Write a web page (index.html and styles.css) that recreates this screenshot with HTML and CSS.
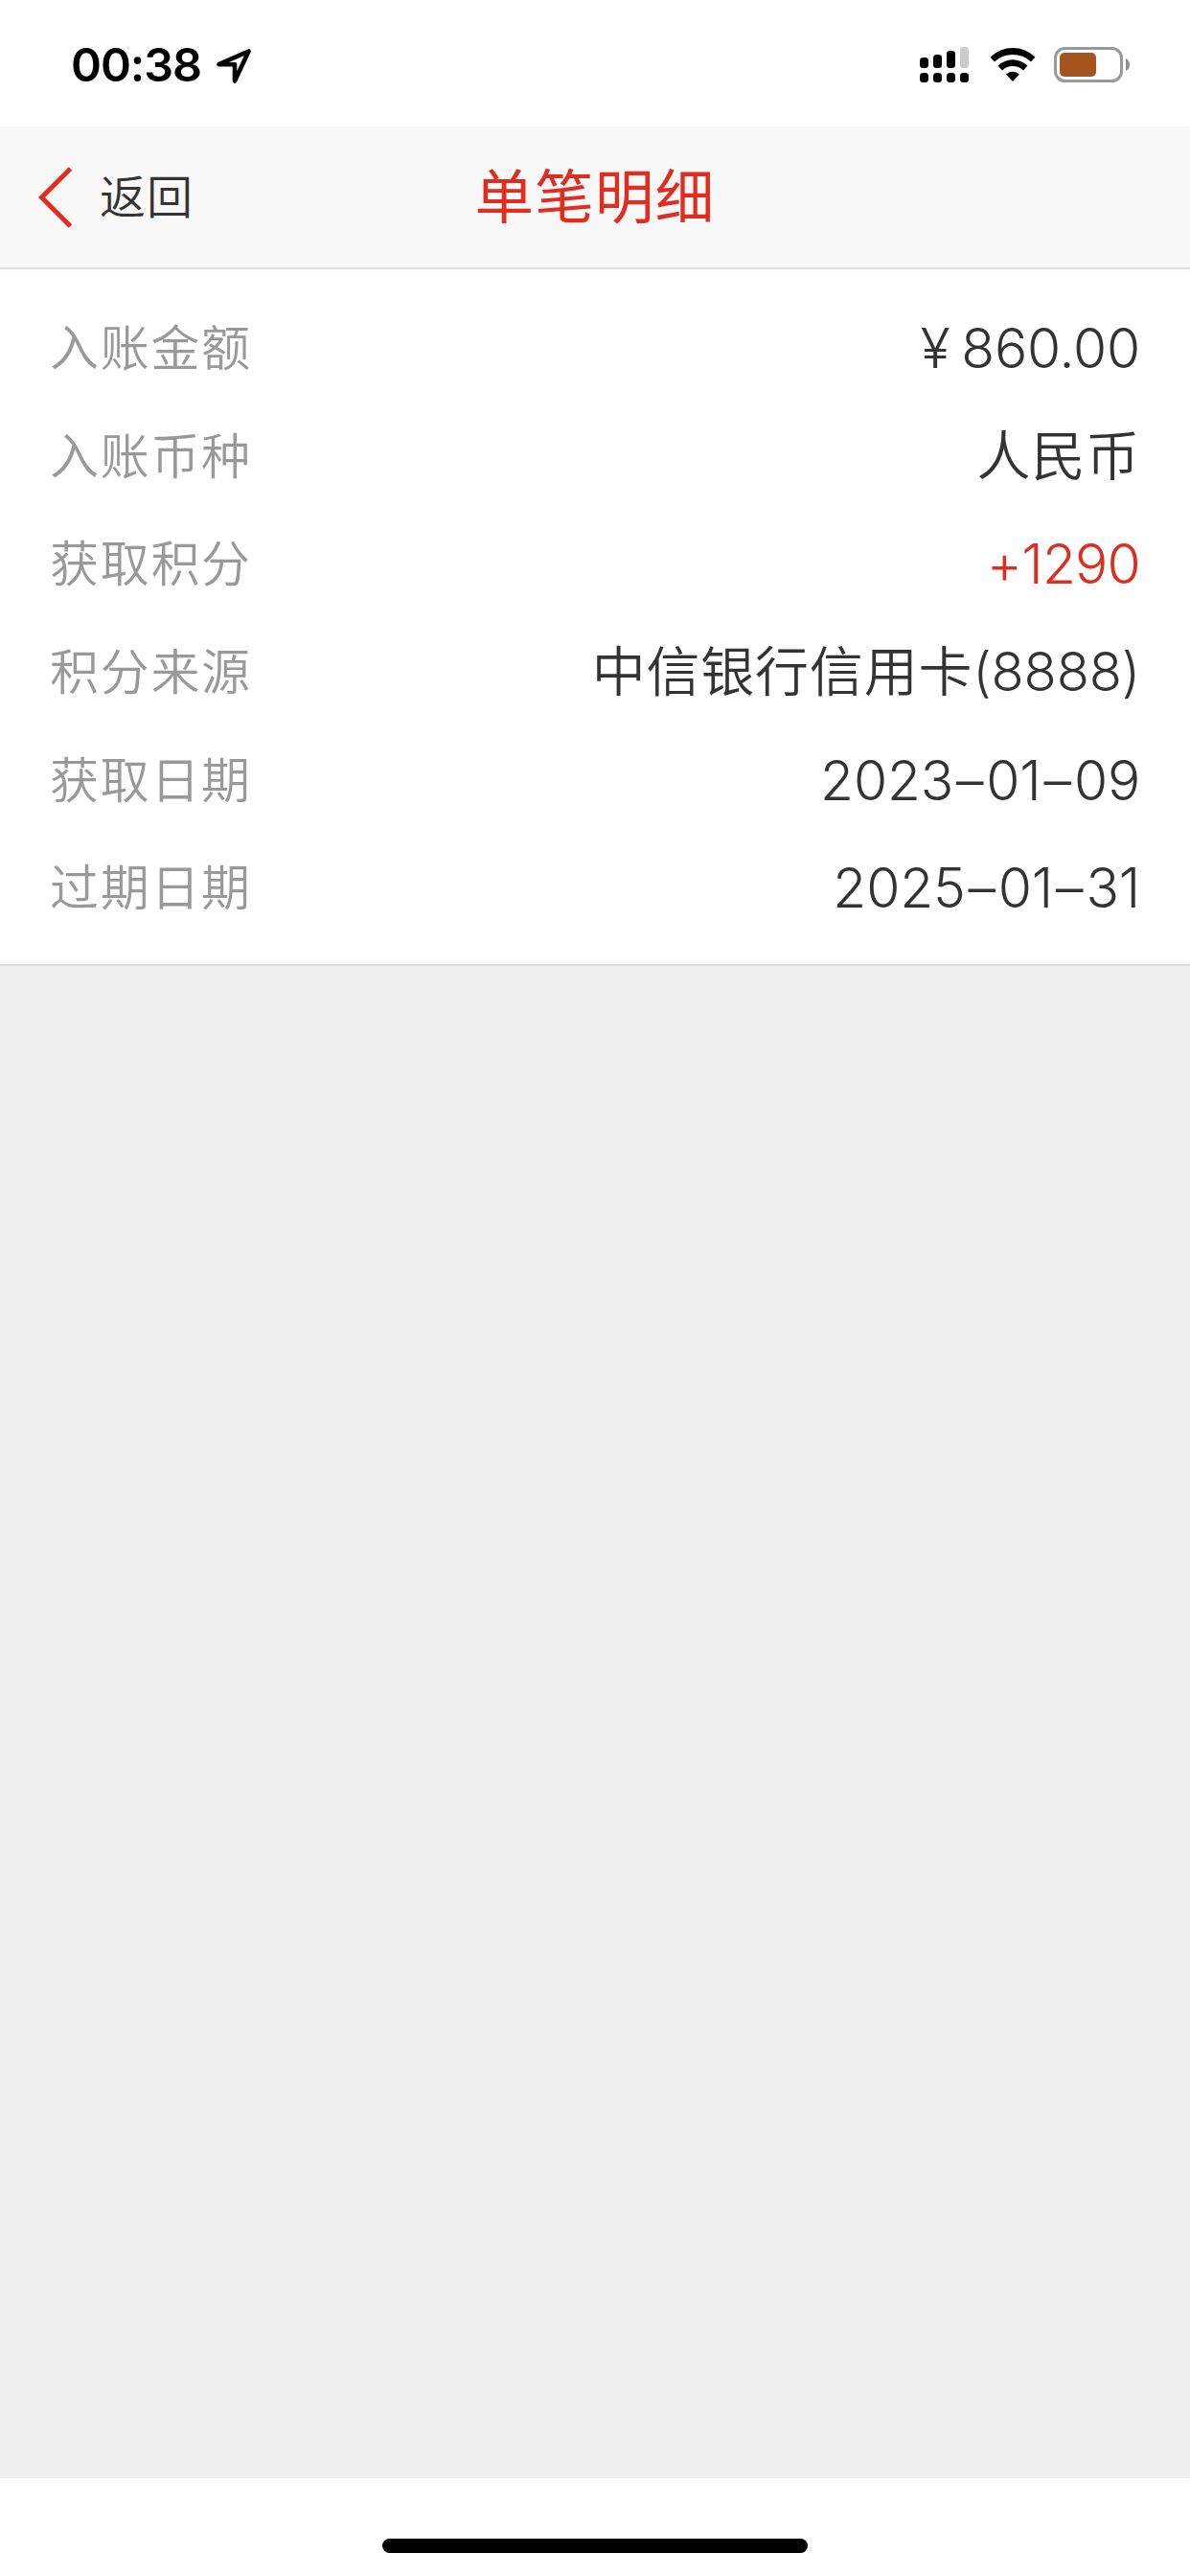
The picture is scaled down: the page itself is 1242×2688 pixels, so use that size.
FILE: index.html
```html
<!DOCTYPE html>
<html lang="zh-CN">
<head>
  <meta charset="UTF-8">
  <meta name="viewport" content="width=device-width, initial-scale=1.0">
  <title>单笔明细</title>
  <link rel="stylesheet" href="styles.css">
</head>
<body>
  <div class="status-bar">
    <div class="status-left">
      <span class="time">00:38</span>
      <svg class="location" width="38" height="38" viewBox="0 0 38 38">
        <path d="M3.5 17.2 L34.5 3.5 L20 34.5 V17.2 Z" fill="none" stroke="#000" stroke-width="4.6" stroke-linejoin="round"/>
      </svg>
    </div>
    <div class="status-right">
      <svg class="signal" width="52" height="38" viewBox="0 0 52 38">
        <rect x="0" y="11" width="9" height="11" rx="3.5"/>
        <rect x="14" y="8" width="9" height="14" rx="3.5"/>
        <rect x="28" y="4" width="9" height="18" rx="3.5"/>
        <rect x="42" y="0" width="9" height="22" rx="3.5" fill="#cbcbcb"/>
        <rect x="0" y="27" width="9" height="10" rx="3.5"/>
        <rect x="14" y="27" width="9" height="10" rx="3.5"/>
        <rect x="28" y="27" width="9" height="10" rx="3.5"/>
        <rect x="42" y="27" width="9" height="10" rx="3.5"/>
      </svg>
      <svg class="wifi" width="48" height="37" viewBox="0 0 48 37">
        <path d="M0.5 10.5 A34 34 0 0 1 47.5 10.5 L43 15.5 A27.5 27.5 0 0 0 5 15.5 Z"/>
        <path d="M8.5 19.5 A22.5 22.5 0 0 1 39.5 19.5 L35 24.5 A16 16 0 0 0 13 24.5 Z"/>
        <path d="M17 28.5 A10.5 10.5 0 0 1 31 28.5 L24 36 Z"/>
      </svg>
      <svg class="battery" width="80" height="38" viewBox="0 0 80 38">
        <rect x="1.5" y="1.5" width="69" height="34" rx="10" fill="none" stroke="#999" stroke-width="3"/>
        <rect x="6" y="6" width="38" height="25" rx="5" fill="#a4541f"/>
        <path d="M75 12 Q79 14 79 18.5 Q79 23 75 25 Z" fill="#8e8e8e"/>
      </svg>
    </div>
  </div>

  <header class="navbar">
    <a class="back">
      <svg width="36" height="64" viewBox="0 0 36 64">
        <path d="M34.5 2 L4.5 32 L34.5 62" fill="none" stroke="#e02d20" stroke-width="5"/>
      </svg>
      <span>返回</span>
    </a>
    <h1>单笔明细</h1>
  </header>

  <main>
    <div class="detail">
      <div class="item"><span class="label">入账金额</span><span class="value"><span class="yen">¥</span>860.00</span></div>
      <div class="item"><span class="label">入账币种</span><span class="value cjk">人民币</span></div>
      <div class="item"><span class="label">获取积分</span><span class="value red">+1290</span></div>
      <div class="item"><span class="label">积分来源</span><span class="value cjk">中信银行信用卡<span class="num">(8888)</span></span></div>
      <div class="item"><span class="label">获取日期</span><span class="value">2023<span class="dash">–</span>01<span class="dash">–</span>09</span></div>
      <div class="item"><span class="label">过期日期</span><span class="value">2025<span class="dash">–</span>01<span class="dash">–</span>31</span></div>
    </div>
  </main>

  <footer>
    <div class="home-bar"></div>
  </footer>
</body>
</html>
```
FILE: styles.css
```css
* {
  box-sizing: border-box;
}

body {
  margin: 0;
  height: 2688px;
  display: flex;
  flex-direction: column;
  background-color: #fff;
  font-family: Inter, "Noto Sans CJK SC", sans-serif;
  color: #333;
}

/* Barra de estado */
.status-bar {
  height: 132px;
  display: flex;
  justify-content: space-between;
  padding: 0 62px 0 74px;
}

.status-left, .status-right {
  display: flex;
  align-items: flex-start;
}

.time {
  margin-top: 39px;
  width: 151px;
  font-size: 48.5px;
  font-weight: 600;
  line-height: 58px;
  letter-spacing: -1.1px;
  color: #000;
}

.location {
  margin-top: 50px;
}

.signal, .battery {
  margin-top: 49px;
}

.wifi {
  margin: 49px 19px 0 21px;
}

/* Cabecera */
.navbar {
  height: 149px;
  display: grid;
  grid-template-columns: 1fr auto 1fr;
  align-items: center;
  padding: 1px 39px 0;
  background-color: #f8f8f8;
  border-bottom: 2px solid #ddd;
}

.back {
  display: flex;
  align-items: center;
  gap: 29px;
  font-size: 48px;
  font-weight: 350;
  line-height: 64px;
  letter-spacing: 1px;
}

h1 {
  margin: 0;
  font-size: 61.5px;
  font-weight: 400;
  line-height: 80px;
  letter-spacing: 1.3px;
  color: #e02d20;
}

/* Detalle */
main {
  flex: 1;
  background-color: #efefef;
}

.detail {
  height: 727px;
  padding: 27px 52px 0;
  background-color: #fff;
  border-bottom: 2px solid #ddd;
}

.item {
  height: 112.6px;
  display: flex;
  justify-content: space-between;
  align-items: center;
}

.label {
  font-size: 51px;
  font-weight: 350;
  line-height: 72px;
  letter-spacing: 1.7px;
  color: #999;
}

.value {
  font-size: 57px;
  font-weight: 360;
  line-height: 72px;
  letter-spacing: -0.2px;
  color: #333;
}

.cjk {
  padding-bottom: 2px;
  font-size: 56px;
  font-weight: 350;
  letter-spacing: 0.8px;
}

.num {
  font-weight: 360;
  letter-spacing: -0.2px;
}

.yen {
  margin-right: 12px;
}

.dash {
  margin: 0 3px;
}

.red {
  letter-spacing: -0.8px;
  color: #e02d20;
}

.home-bar {
  width: 444px;
  height: 15px;
  margin: 63px auto 24px;
  border-radius: 8px;
  background-color: #000;
}
```
